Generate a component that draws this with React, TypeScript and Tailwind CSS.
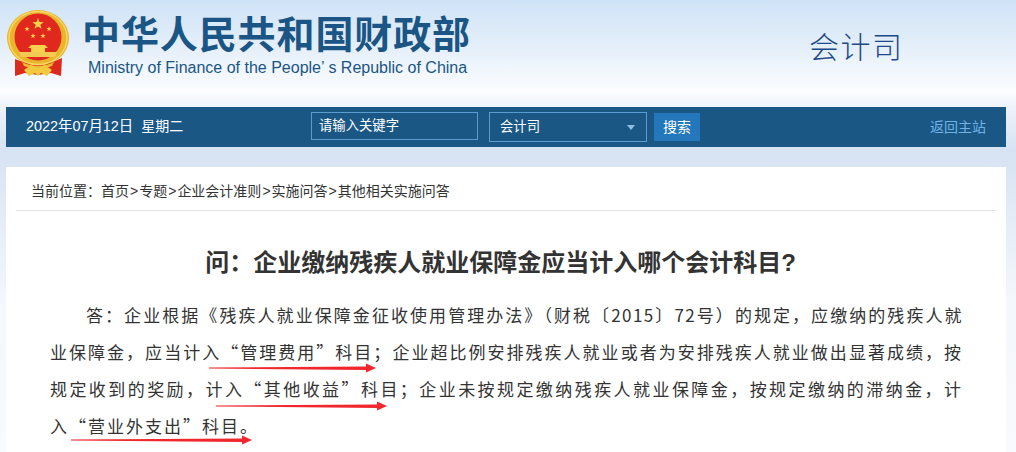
import React from "react";

const cjk = { fontFamily: '"Liberation Sans","Noto Sans CJK SC",sans-serif' };
const han = { fontFamily: '"Noto Sans CJK SC",sans-serif' };

function Star({ cx, cy, r }: { cx: number; cy: number; r: number }) {
  const pts: string[] = [];
  for (let i = 0; i < 10; i++) {
    const a = -Math.PI / 2 + (i * Math.PI) / 5;
    const rr = i % 2 === 0 ? r : r * 0.4;
    pts.push(`${cx + rr * Math.cos(a)},${cy + rr * Math.sin(a)}`);
  }
  return <polygon points={pts.join(" ")} fill="#f7d24a" />;
}

function Emblem() {
  return (
    <svg width="62" height="67" viewBox="0 0 62 67" className="shrink-0">
      <ellipse cx="31" cy="28" rx="31" ry="28" fill="#e9b52b" />
      <ellipse cx="31" cy="28" rx="29" ry="26.5" fill="none" stroke="#f8d766" strokeWidth="1.4" />
      <circle cx="31" cy="27" r="23.5" fill="#e0281e" />
      <Star cx={31} cy={14} r={6} />
      <Star cx={20} cy={19} r={2.8} />
      <Star cx={42} cy={19} r={2.8} />
      <Star cx={26} cy={26} r={2.8} />
      <Star cx={36} cy={26} r={2.8} />
      <path d="M24 35 H38 L41 38 H38 V42 H24 V38 H21 Z" fill="#f7d24a" />
      <path d="M12 42 H50 L48 47 H14 Z" fill="#f3cb52" />
      <path d="M8 49 L16 52 Q31 59 46 52 L55 48 L54 66 L44 63 L31 65 L18 63 L8 66 Z" fill="#dc2a1c" />
      <path d="M15 52 Q31 60 47 52 L45 56 Q31 62 17 56 Z" fill="#eeb92f" />
      <path d="M17 60 L24 55 L31 58 L38 55 L45 60 L40 66 L34 63 L31 66 L28 63 L22 66 Z" fill="#f3c93f" />
    </svg>
  );
}

function Arrow({ x1, x2, y }: { x1: number; x2: number; y: number }) {
  const hx = x2 - 10;
  return (
    <polygon
      points={`${x1},${y - 0.5} ${hx},${y - 1.5} ${hx},${y - 4.5} ${x2},${y} ${hx},${y + 4.5} ${hx},${y + 2} ${x1},${y + 0.5}`}
      fill="#f0282e"
    />
  );
}

function Sep() {
  return <span className="mx-px">&gt;</span>;
}

export default function App() {
  return (
    <div
      className="w-[1016px] h-[452px] overflow-hidden flex flex-col bg-[linear-gradient(180deg,#cfe3f6_0px,#e6f0fa_50px,#fbfdff_92px,#eef3fb_107px,#d6e3f3_150px,#dae5f4_167px,#f4f7fb_300px,#f8fafd_452px)]"
      style={cjk}
    >
      <header className="h-[107px] flex items-start shrink-0">
        <div className="ml-[7px] mt-[10px]"><Emblem /></div>
        <div className="ml-[13px] mt-[12px] w-[400px]">
          <div className="text-[38px] leading-[46px] font-bold tracking-[0.9px] text-[#1b5585] whitespace-nowrap">
            中华人民共和国财政部
          </div>
          <div className="ml-[6px] text-[16px] leading-[20px] text-[#1b5585] whitespace-nowrap">
            Ministry of Finance of the People’ s Republic of China
          </div>
        </div>
        <div className="ml-[327px] mt-[25px] text-[30px] leading-[40px] tracking-[1.5px] font-light text-[#1c4a88] whitespace-nowrap" style={han}>会计司</div>
      </header>

      <nav className="ml-[6px] w-[1000px] h-[40px] bg-[#1b5785] flex items-center shrink-0 text-white text-[14px]">
        <div className="ml-[20px] w-[285px] whitespace-pre text-[14.4px]">2022年07月12日  <span className="text-[14px]">星期二</span></div>
        <div className="w-[167px] h-[28px] border border-[#5a9ccf] flex items-center pl-[7px] mb-[2px] text-[13.33px]">请输入关键字</div>
        <div className="ml-[11px] w-[158px] h-[30px] border border-[#5a9ccf] flex items-center justify-between pl-[10px] pr-[11px] text-[13.33px]">
          <span>会计司</span>
          <span className="w-0 h-0 border-x-[4px] border-x-transparent border-t-[5px] border-t-[#8fc0e4]" />
        </div>
        <div className="ml-[7px] w-[46px] h-[28px] bg-[#2377ba] flex items-center justify-center">搜索</div>
        <div className="ml-auto mr-[20px] text-[#6fb3e6]">返回主站</div>
      </nav>

      <main className="relative ml-[6px] w-[1000px] mt-[20px] bg-white flex-1 min-h-0">
        <div className="mx-[10px] h-[44px] border-b border-[#e3e3e3] pl-[15px] pt-[14px] text-[#333] text-[14px] leading-[20px] whitespace-nowrap">
          当前位置：首页<Sep />专题<Sep />企业会计准则<Sep />实施问答<Sep />其他相关实施问答
        </div>
        <h1 className="mt-[32px] pr-[11px] text-center text-[24px] leading-[40px] font-bold text-[#333]">
          问：企业缴纳残疾人就业保障金应当计入哪个会计科目?
        </h1>
        <div lang="zh-CN" className="mt-[13px] ml-[44px] mr-[43px] text-[17px] leading-[37px] tracking-[2px] text-[#333]" style={han}>
          <p className="pl-[36px] whitespace-nowrap tracking-[1.45px] text-justify [text-align-last:justify]">答：企业根据《残疾人就业保障金征收使用管理办法》（财税〔2015〕72号）的规定，应缴纳的残疾人就</p>
          <p className="whitespace-nowrap text-justify [text-align-last:justify]">业保障金，应当计入“管理费用”科目；企业超比例安排残疾人就业或者为安排残疾人就业做出显著成绩，按</p>
          <p className="whitespace-nowrap text-justify [text-align-last:justify]">规定收到的奖励，计入“其他收益”科目；企业未按规定缴纳残疾人就业保障金，按规定缴纳的滞纳金，计</p>
          <p className="whitespace-nowrap">入“营业外支出”科目。</p>
        </div>
        <svg className="absolute left-[-6px] top-[-167px] pointer-events-none" width="1016" height="452" viewBox="0 0 1016 452">
          <Arrow x1={209} x2={376} y={368} />
          <Arrow x1={216} x2={387} y={406} />
          <Arrow x1={71} x2={252} y={440} />
        </svg>
      </main>
    </div>
  );
}
